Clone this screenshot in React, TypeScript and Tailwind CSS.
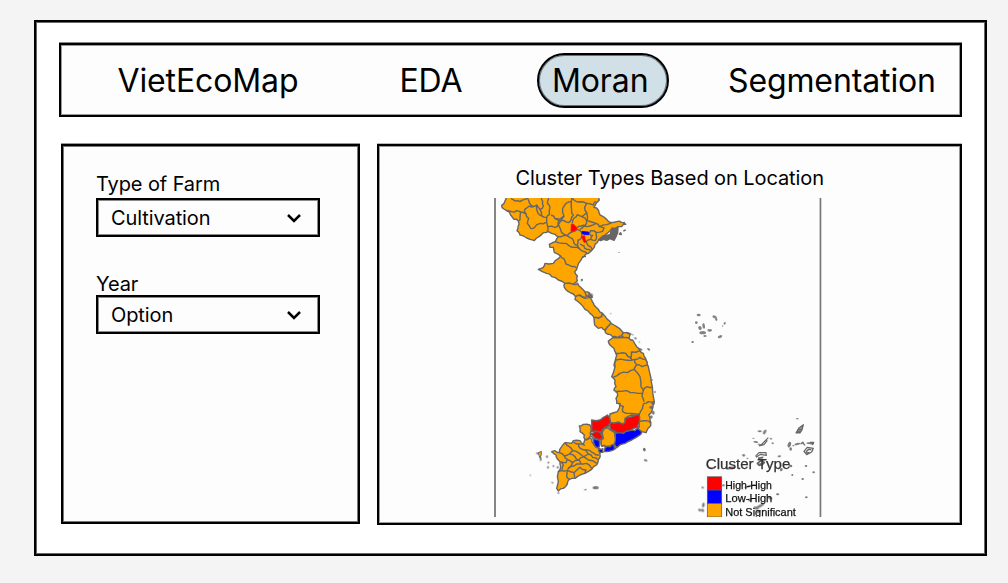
import React from "react";

type Pt = [number, number];

const parse = (s: string): Pt[] =>
  s.trim().split(/\s+/).map((p) => p.split(",").map(Number) as Pt);

// Breaks long edges with a small repeatable offset, the same from both ends of a shared border.
const edge = (a: Pt, b: Pt): Pt[] => {
  const dx = b[0] - a[0];
  const dy = b[1] - a[1];
  const len = Math.hypot(dx, dy);
  if (len < 11) return [b];
  const k = Math.abs(Math.sin((a[0] + b[0]) * 12.98 + (a[1] + b[1]) * 78.23) * 437.5) % 1;
  const side = dx > 0 || (dx === 0 && dy > 0) ? 1 : -1;
  const o = (k - 0.5) * 6 * side;
  return [[(a[0] + b[0]) / 2 - (dy / len) * o, (a[1] + b[1]) / 2 + (dx / len) * o], b];
};

const trace = (s: string, closed: boolean) => {
  const pts = parse(s);
  const out: Pt[] = [pts[0]];
  for (let i = 1; i < pts.length; i++) out.push(...edge(pts[i - 1], pts[i]));
  if (closed) out.push(...edge(pts[pts.length - 1], pts[0]));
  return "M" + out.map((p) => p[0].toFixed(1) + "," + p[1].toFixed(1)).join("L") + (closed ? "Z" : "");
};

const ORANGE = "#ffa500";
const RED = "#ff0000";
const BLUE = "#0000ff";
const GREY = "#666666";

const Area = ({ p, fill = ORANGE }: { p: string; fill?: string }) => (
  <path d={trace(p, true)} fill={fill} />
);
const Line = ({ p }: { p: string }) => <path d={trace(p, false)} fill="none" />;

const Sheet = ({ x, y, w = 4.2, children }: { x: number; y: number; w?: number; children: React.ReactNode }) => (
  <g transform={`translate(${x} ${y}) scale(0.33333)`} stroke={GREY} strokeWidth={w} strokeLinejoin="round">
    {children}
  </g>
);

const north = [
  "63,26 75,33 90,35 105,28 112,24",
  "112,24 118,38 130,50 140,45 150,58 160,48 158,34 154,22",
  "50,62 65,65 80,62 92,66 108,72 104,58 118,48 130,50",
  "92,66 90,90 85,93",
  "108,72 116,85 112,100 122,115 133,113 150,100 168,97",
  "140,45 144,70 155,78 170,82 178,74 180,52 172,40 176,24",
  "150,58 155,78",
  "170,82 173,110 195,112 205,104 208,92 195,86 183,75",
  "173,110 172,125",
  "205,104 222,78 218,55 228,40 244,34 246,24",
  "195,86 210,88 222,78",
  "244,34 245,62 250,75 243,90 235,98 222,92 208,92",
  "246,24 262,36 280,36 290,40 284,52 290,68 276,80 262,74 252,84 247,100",
  "290,40 310,45 318,34",
  "276,80 290,92 286,106 274,108 262,112",
  "290,68 292,92 318,100 328,110 350,104 365,98",
  "318,100 300,108 282,108 270,118",
  "328,110 342,114 338,124 320,128 302,122 298,130",
  "205,104 215,128 232,137 245,126 262,118 270,122 276,132",
  "205,140 222,136 232,137 246,145 252,160 262,165 268,176 252,172 236,166 218,160 196,155",
  "262,165 264,150 274,144 276,132",
  "288,156 302,148 308,136 298,130",
  "288,156 294,166 308,180",
  "268,176 280,184 292,190",
  "270,162 282,168 290,178 302,182",
  "212,198 222,206 228,222 246,230 260,234",
  "302,148 315,152 320,142 318,128",
];

const mekong = [
  "88,128 103,138 118,132 128,122 118,110 105,98",
  "103,138 112,148 108,158 92,156",
  "118,132 135,140 145,150 128,158 112,148",
  "128,122 145,128 160,140 175,132 165,120 152,116 145,102 130,96",
  "145,102 165,106",
  "165,120 180,122 192,130 207,135",
  "145,150 160,140 175,150 200,160",
  "175,132 188,142 204,148",
  "145,150 152,162 170,160 185,176",
  "128,158 115,175 112,182 92,182 84,186",
  "115,175 132,168 150,162",
  "132,188 150,172 168,180 164,190",
  "112,182 132,188 134,203",
  "112,182 110,200 118,208",
  "92,156 100,166 96,180",
];

// x, y, half width, half height, tilt
const paracel = [
  [56,45,6,4,0],[49,68,4,4,0],[60,84,5,6,-35],[71,78,4,8,-10],[68,98,10,5,0],[75,108,5,3,0],
  [89,91,7,4,0],[104,51,7,4,25],[109,58,3,5,0],[120,110,7,4,-20],[134,70,3,4,20],[128,78,2,2,0],[38,126,4,3,-20],
];
const dots = [
  [209,64,6,3,0],[224,66,4,8,30],[190,85,3,2,0],[197,96,7,3,10],[207,103,4,2,20],[243,86,3,3,0],[248,100,3,3,0],
  [161,136,4,4,0],[172,145,3,2,0],[268,139,5,3,-10],[322,26,4,2,0],[274,179,4,5,30],[302,168,5,4,0],
  [307,195,3,3,0],[348,168,4,3,0],[371,187,4,3,0],[338,207,4,3,0],[349,262,4,3,0],[263,253,5,3,0],
  [38,233,4,3,10],[40,285,4,7,10],[29,300,5,4,30],[38,301,4,5,-30],[122,174,14,4,-10],[213,163,9,4,-10],
  [180,228,18,3,-15],[100,226,5,3,0],[152,226,3,2,0],[240,264,7,4,25],[210,288,14,4,-30],[198,294,8,4,20],
  [205,305,6,4,-30],[180,270,6,4,0],[298,104,5,9,20],[302,117,4,5,0],[322,102,9,3,-15],[336,99,6,3,-30],[360,100,11,3,5],[310,107,3,2,0],
];

const Blobs = ({ d, o = 0.85 }: { d: number[][]; o?: number }) => (
  <g fill={GREY} stroke="none" opacity={o}>
    {d.map(([x, y, rx, ry, t], i) => (
      <ellipse key={i} cx={x} cy={y} rx={rx} ry={ry} transform={`rotate(${t} ${x} ${y})`} />
    ))}
  </g>
);

const ClusterMap = () => (
  <svg className="block h-[319px] w-[328px] overflow-hidden" viewBox="494 198 328 319" role="img">
    <rect x="494" y="198" width="2" height="319" fill="#858585" />
    <rect x="819.6" y="198" width="1.7" height="319" fill="#777" />

    <Sheet x={490} y={190}>
      <Area p="52,14 45,33 35,46 42,57 50,62 62,75 72,88 85,93 84,110 81,122 90,135 105,141 120,148 133,152 147,140 160,128 175,125 195,133 205,140 196,155 178,163 180,172 190,172 193,187 205,193 212,198 205,206 190,220 165,220 160,232 145,238 170,250 185,260 205,270 225,280 250,283 262,272 262,258 254,245 262,230 272,212 283,198 295,190 308,178 315,163 326,150 345,135 365,118 385,110 395,110 407,103 395,97 380,95 365,98 350,88 330,75 325,60 312,52 328,30 328,14" />
      {north.map((p) => <Line key={p} p={p} />)}
      <path d="M326,149 338,138 360,134 366,114 380,116 384,112 383,128 378,140 372,151 360,146 350,151 340,148 332,152Z" fill={GREY} />
      <path d="M388,132 392,128 394,134ZM400,123 407,120M276,201 288,199M404,96 400,102" fill={GREY} />
      <path d="M244,102 252,104 262,114 254,122 243,124Z" fill={RED} stroke={RED} strokeWidth="2" />
      <path d="M276,124 296,126 297,134 286,134 276,131Z" fill={BLUE} stroke={BLUE} strokeWidth="2" />
      <path d="M276,139 284,137 285,147 289,156 282,157 278,148Z" fill={RED} stroke={RED} strokeWidth="2" />
      <Blobs d={[[387,187,2,2,0],[276,269,3,3,0]]} />
    </Sheet>

    <Sheet x={530} y={270}>
      <Area p="105,40 103,52 115,65 130,72 137,80 150,75 165,82 178,82 187,82 178,68 165,65 158,58 150,50 143,40 130,43" />
      <Area p="137,80 135,88 150,100 165,118 180,130 192,143 205,145 215,140 217,130 205,118 192,105 187,95 180,82 165,85 150,76" />
      <Area p="192,143 194,165 205,175 215,172 225,180 232,172 243,160 232,148 217,130 215,140 205,145" />
      <Area p="225,182 232,192 248,200 262,203 275,198 280,188 268,175 252,165 243,160" />
      <Area p="275,198 285,205 298,202 300,192 290,188 280,188" />
      <Area p="253,305 252,285 258,262 257,249 268,250 288,250 302,263 316,278 306,292 300,310" />
      <Area p="302,263 304,246 330,242 340,250 347,265 352,290 356,310 300,310 308,290 316,278" />
      <Area p="248,203 235,213 240,225 252,235 257,249 268,250 288,250 302,263 304,246 330,242 320,230 308,210 298,205 280,203" />
      <Blobs d={[[155,31,3,3,0],[242,131,2,2,0],[308,194,3,2,0],[316,205,4,3,20],[328,216,2,2,0],[356,238,5,3,30],[184,76,5,6,-30],[296,190,10,3,20],[332,238,6,3,20]]} />
      <Line p="165,66 168,76 178,80 176,70" />
    </Sheet>

    <Sheet x={540} y={360}>
      <path
        d={trace("228,0 225,20 215,50 225,60 228,80 222,92 232,98 228,115 230,130 240,130 232,155 210,162 212,190 235,190 250,195 258,190 255,175 275,165 298,163 298,200 292,206 305,215 318,218 332,197 330,180 326,165 337,150 343,125 337,80 332,50 325,20 321,5 315,-2 300,-8 285,-2 256,0", true)}
        fill={ORANGE}
      />
      <path d="M224,8 228,-30 345,-30 325,10Z" fill={ORANGE} stroke="none" opacity="0" />
      <Line p="218,52 240,40 262,38 282,28 290,14 284,-2" />
      <Line p="282,28 300,50 303,80 310,90 306,108 312,125" />
      <Line p="226,96 245,94 260,92 282,98 306,100" />
      <Line p="310,90 322,80 337,82" />
      <Line p="290,14 306,20 324,14" />
      <Line p="235,130 250,140 248,155 270,160 298,163" />
      <Line p="298,163 308,145 312,130 325,125 343,125" />
      <Line p="298,185 318,182 332,190" />
      <Area p="118,198 130,193 150,195 153,212 152,228 148,232 135,238 133,225 120,215" />
      <Blobs d={[[339,130,5,5,0],[334,142,6,5,0],[340,158,4,6,0],[334,171,4,5,0],[336,60,2,3,0],[345,96,2,4,0],[313,268,3,4,0]]} />
    </Sheet>

    <Sheet x={530} y={410}>
      <Area p="65,125 75,122 88,128 95,110 105,98 125,100 130,92 150,92 160,102 164,90 180,84 186,96 193,106 206,114 210,130 205,150 200,165 185,178 165,190 150,195 135,205 118,208 112,222 100,235 85,243 80,235 85,215 85,185 92,170 90,155 83,148 78,135" />
      {mekong.map((p) => <Line key={p} p={p} />)}
      <path d="M25,128 34,124 34,134 30,144 27,136Z" fill={ORANGE} strokeWidth="3" />
      <Blobs d={[[22,130,4,3,0],[32,147,3,6,0],[51,140,3,4,0],[55,158,3,3,0],[54,172,3,4,0],[70,168,3,3,0],[83,172,3,4,0],[67,218,4,2,30],[1,196,2,2,0],[85,249,3,3,0],[166,239,4,2,-20],[197,233,9,5,0],[343,119,4,5,-40],[347,151,6,3,15]]} />
    </Sheet>

    <Sheet x={575} y={400}>
      <Area p="107,68 100,78 82,88 78,98 85,112 78,125 80,138 95,140 118,132 122,100 112,92" />
      <Area fill={RED} p="50,60 75,60 85,52 97,45 102,50 107,68 100,78 82,88 75,97 60,93 50,95" />
      <Area fill={RED} p="105,80 107,68 130,66 142,72 150,68 152,55 170,50 192,42 192,70 190,82 175,86 165,92 145,100 125,98 118,93 108,90" />
      <Area p="82,98 85,90 100,84 110,92 120,100 122,115 118,132 110,138 95,140 80,138 78,125 85,115" />
      <Area fill={RED} p="47,100 62,93 78,98 83,108 75,120 60,115" />
      <Area fill={BLUE} p="120,100 145,100 165,92 180,92 190,86 200,95 195,105 170,120 150,130 125,143 118,132 121,118" />
      <Area fill={BLUE} p="50,110 60,117 72,120 74,135 72,142 60,138 56,128" />
      <Area fill={BLUE} p="90,143 105,140 118,134 122,145 102,154 88,155" />
      <Area fill={BLUE} p="73,146 84,146 84,157 74,157" />
    </Sheet>

    <Sheet x={680} y={300}><Blobs d={paracel} o={0.8} /></Sheet>

    <Sheet x={690} y={410} w={3.6}>
      <g fill="none">
        <path d="M318,69 326,55 340,44 336,60 330,69ZM323,60 334,58M320,66 332,65" fill="#999" />
        <path d="M342,124 352,112 370,115 365,126 350,134ZM348,126 356,118 364,119M345,130 358,127M338,98 345,106M360,97 371,97 367,105" strokeWidth="4" />
        <path d="M207,108 216,102 235,83M207,108 222,104 232,91M198,137 207,128 228,128 229,136 212,133 199,141Z" />
        <path d="M202,160 216,150 223,158 208,166ZM204,145 220,142" strokeWidth="5" />
      </g>
      <Blobs d={dots} />
    </Sheet>

    <g stroke="#555" strokeWidth="0.7">
      <rect x="707.3" y="476.8" width="14.4" height="13.3" fill={RED} />
      <rect x="707.3" y="490.1" width="14.4" height="13.3" fill={BLUE} />
      <rect x="707.3" y="503.4" width="14.4" height="13.6" fill={ORANGE} />
    </g>
    <g fill="#333" stroke="#333" strokeWidth="0.25" className="font-['Liberation_Sans',sans-serif]">
      <text x="705.8" y="469.3" fontSize="14.6" textLength="84.5" lengthAdjust="spacingAndGlyphs">Cluster Type</text>
      <g fill="#111" stroke="#111" fontSize="11">
        <text x="725.3" y="489" textLength="46.5" lengthAdjust="spacingAndGlyphs">High-High</text>
        <text x="725.3" y="502.3" textLength="47" lengthAdjust="spacingAndGlyphs">Low-High</text>
        <text x="725.3" y="515.6" textLength="70.5" lengthAdjust="spacingAndGlyphs">Not Significant</text>
      </g>
    </g>
  </svg>
);

const Select = ({ value }: { value: string }) => (
  <button className="flex h-[39px] w-56 items-center justify-between border-2 border-black pr-[17px] pl-[13px] text-[20px] leading-none tracking-[-0.1px] shadow-[inset_0_0_0_1px_#8a8a8a]">
    <span>{value}</span>
    <svg className="h-2.5 w-[14px]" viewBox="0 0 14 10" fill="none" stroke="black" strokeWidth="2.5">
      <path d="M1 2 7 8 13 2" />
    </svg>
  </button>
);

export default function App() {
  return (
    <div className="h-[583px] w-[1008px] bg-[#f4f4f4] pt-5 pl-[34px] font-[Inter,sans-serif] text-black">
      <main className="h-[536px] w-[953px] border-2 border-black bg-white pt-[21px] pl-[23px] shadow-[inset_0_0_0_1px_#666]">
        <nav className="flex h-[74px] w-[903px] items-center border-2 border-black bg-[#fdfdfd] text-[32px] leading-none tracking-[-0.12px] shadow-[inset_0_0_0_1px_#999,0_-1px_0_0_#888]">
          <a className="ml-[56.5px] w-[282px] pt-0.5">VietEcoMap</a>
          <a className="w-[137.5px] pt-0.5">EDA</a>
          <a className="flex h-[55px] w-[132px] items-center rounded-full border-2 border-black bg-[#d0e0e6] pt-0.5 pl-[13px] shadow-[inset_0_0_0_1px_#66707a]">Moran</a>
          <a className="ml-[59px] pt-0.5">Segmentation</a>
        </nav>
        <div className="mt-[27px] ml-0.5 flex gap-[17px]">
          <aside className="h-[380px] w-[299px] border-2 border-black bg-[#fdfdfd] pt-[25px] pl-[33px] shadow-[inset_0_0_0_1px_#777,0_-1px_0_0_#999]">
            <div className="flex h-[27px] items-center pb-0.5 text-[20px] leading-none tracking-[-0.1px]">Type of Farm</div>
            <div className="h-[72px]"><Select value="Cultivation" /></div>
            <div className="flex h-[25px] items-center pt-0.5 text-[20px] leading-none tracking-[-0.1px]">Year</div>
            <Select value="Option" />
          </aside>
          <section className="flex h-[381px] w-[585px] flex-col border-2 border-black bg-[#fdfdfd] shadow-[inset_0_0_0_1px_#999,0_-1px_0_0_#bbb]">
            <h1 className="flex h-[52px] items-center pt-3 pl-[136.5px] text-[20px] leading-none tracking-[-0.09px]">Cluster Types Based on Location</h1>
            <div className="ml-[115px]"><ClusterMap /></div>
          </section>
        </div>
      </main>
    </div>
  );
}
